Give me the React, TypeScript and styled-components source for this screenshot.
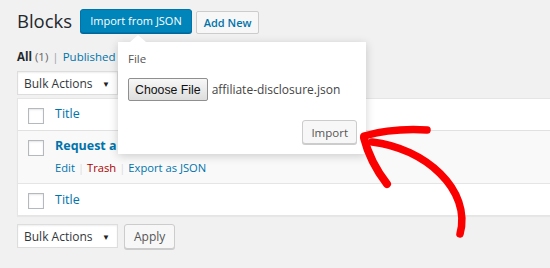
import React from "react";
import styled, { createGlobalStyle } from "styled-components";

const GlobalStyle = createGlobalStyle`
  html, body {
    margin: 0;
    padding: 0;
    background: #f1f1f1;
    overflow: hidden;
  }
  body {
    font-family: "Open Sans", "Noto Sans", sans-serif;
    font-size: 12px;
    color: #444;
  }
`;

const Page = styled.div`
  position: relative;
  width: 550px;
  height: 268px;
  padding: 9px 0 0 17px;
  box-sizing: border-box;
  overflow: hidden;
`;

const Header = styled.div`
  display: flex;
  align-items: flex-start;
  height: 26px;
`;

const PageTitle = styled.h1`
  margin: 0 8px 0 0;
  font-size: 18.5px;
  font-weight: 400;
  line-height: 24px;
  color: #23282d;
`;

const PrimaryButton = styled.button`
  height: 24px;
  padding: 0 9px;
  border: 1px solid #0073aa;
  border-radius: 3px;
  background: #0085ba;
  box-shadow: 0 1px 0 #006799;
  color: #fff;
  font-family: inherit;
  font-size: 11px;
  line-height: 20px;
`;

const TitleAction = styled.button`
  height: 23px;
  margin: 2px 0 0 4px;
  padding: 0 7px;
  border: 1px solid #ccc;
  border-radius: 2px;
  background: #f7f7f7;
  color: #0073aa;
  font-family: inherit;
  font-size: 11px;
  font-weight: 600;
  line-height: 20px;
`;

const Filters = styled.div`
  display: flex;
  align-items: center;
  gap: 3px;
  height: 21px;
  margin-top: 11px;
  color: #666;
  font-size: 11.5px;
`;

const FilterCurrent = styled.span`
  font-weight: 700;
  color: #23282d;
`;

const FilterSep = styled.span`
  color: #a0a5aa;
  margin: 0 1px;
`;

const FilterLink = styled.span`
  color: #0073aa;
`;

const TableNav = styled.div<{ $gap: number }>`
  display: flex;
  align-items: flex-start;
  gap: 6px;
  margin: ${(p) => p.$gap}px 0 0;
`;

const Select = styled.div`
  display: flex;
  align-items: center;
  justify-content: space-between;
  box-sizing: border-box;
  width: 101px;
  height: 24px;
  padding: 0 7px 0 6px;
  background: #fff;
  border: 1px solid #ddd;
  box-shadow: inset 0 1px 2px rgba(0, 0, 0, 0.07);
  color: #32373c;
  font-size: 12px;
`;

const Caret = styled.span`
  font-size: 8px;
  color: #222;
`;

const SecondaryButton = styled.button`
  height: 25px;
  padding: 0 9px;
  border: 1px solid #ccc;
  border-radius: 3px;
  background: #f7f7f7;
  box-shadow: 0 1px 0 #ccc;
  color: #555;
  font-family: inherit;
  font-size: 12px;
  line-height: 21px;
`;

const Table = styled.div`
  margin: 3px 0 0;
  width: 560px;
  background: #fff;
  border: 1px solid #e5e5e5;
  box-shadow: 0 1px 1px rgba(0, 0, 0, 0.04);
`;

const Row = styled.div<{ $height: number; $alt?: boolean; $divider?: string }>`
  display: flex;
  align-items: flex-start;
  height: ${(p) => p.$height}px;
  background: ${(p) => (p.$alt ? "#f9f9f9" : "#fff")};
  border-top: ${(p) => (p.$divider ? `1px solid ${p.$divider}` : "none")};
  box-sizing: border-box;
`;

const CheckCell = styled.div<{ $top: number }>`
  width: 37px;
  padding: ${(p) => p.$top}px 0 0 10px;
  box-sizing: border-box;
  flex: none;
`;

const Checkbox = styled.span`
  display: block;
  width: 14px;
  height: 14px;
  border: 1px solid #b4b9be;
  background: #fff;
  box-shadow: inset 0 1px 2px rgba(0, 0, 0, 0.1);
`;

const TitleCell = styled.div<{ $top: number }>`
  padding-top: ${(p) => p.$top}px;
  display: flex;
  flex-direction: column;
  gap: 5px;
`;

const ColumnTitle = styled.span`
  color: #0073aa;
  font-size: 12.5px;
  line-height: 18px;
`;

const RowTitle = styled.span`
  color: #0073aa;
  font-size: 12.5px;
  font-weight: 700;
  line-height: 18px;
`;

const RowActions = styled.div`
  display: flex;
  gap: 3px;
  font-size: 11.2px;
  line-height: 16px;
`;

const ActionLink = styled.span<{ $danger?: boolean }>`
  color: ${(p) => (p.$danger ? "#a00" : "#0073aa")};
`;

const ActionSep = styled.span`
  color: #ddd;
`;

const Popover = styled.div`
  position: absolute;
  left: 118px;
  top: 42px;
  width: 248px;
  height: 112px;
  box-sizing: border-box;
  padding: 9px 9px 10px 10px;
  background: #fff;
  box-shadow: 0 2px 9px rgba(0, 0, 0, 0.18);
  display: flex;
  flex-direction: column;

  &::before {
    content: "";
    position: absolute;
    left: 12px;
    top: -7px;
    border-left: 8px solid transparent;
    border-right: 8px solid transparent;
    border-bottom: 7px solid #fff;
  }
`;

const FieldLabel = styled.span`
  color: #555;
  font-size: 11.5px;
  line-height: 16px;
`;

const FileRow = styled.div`
  display: flex;
  align-items: center;
  gap: 4px;
  margin-top: 11px;
`;

const ChooseButton = styled.button`
  height: 23px;
  padding: 0 6px;
  border: 1px solid #8f8f8f;
  border-radius: 2px;
  background: linear-gradient(#f7f7f7, #dedede);
  color: #111;
  font-family: "Liberation Sans", Arial, sans-serif;
  font-size: 12.3px;
`;

const FileName = styled.span`
  color: #444;
  font-size: 12px;
`;

const PopoverFooter = styled.div`
  display: flex;
  justify-content: flex-end;
  margin-top: auto;
`;

const ImportButton = styled(SecondaryButton)`
  height: 24px;
  padding: 0 8px;
  font-size: 11.5px;
`;

const Annotation = styled.svg`
  position: absolute;
  left: 350px;
  top: 118px;
  pointer-events: none;
`;

export default function App() {
  return (
    <>
      <GlobalStyle />
      <Page>
        <Header>
          <PageTitle>Blocks</PageTitle>
          <PrimaryButton>Import from JSON</PrimaryButton>
          <TitleAction>Add New</TitleAction>
        </Header>

        <Filters>
          <FilterCurrent>All</FilterCurrent>
          <span>(1)</span>
          <FilterSep>|</FilterSep>
          <FilterLink>Published</FilterLink>
          <span>(1)</span>
        </Filters>

        <TableNav $gap={4}>
          <Select>
            Bulk Actions <Caret>▼</Caret>
          </Select>
        </TableNav>

        <Table>
          <Row $height={31}>
            <CheckCell $top={9}>
              <Checkbox />
            </CheckCell>
            <TitleCell $top={6}>
              <ColumnTitle>Title</ColumnTitle>
            </TitleCell>
          </Row>
          <Row $height={53} $alt $divider="#e1e1e1">
            <CheckCell $top={9}>
              <Checkbox />
            </CheckCell>
            <TitleCell $top={6}>
              <RowTitle>Request a Quote</RowTitle>
              <RowActions>
                <ActionLink>Edit</ActionLink>
                <ActionSep>|</ActionSep>
                <ActionLink $danger>Trash</ActionLink>
                <ActionSep>|</ActionSep>
                <ActionLink>Export as JSON</ActionLink>
              </RowActions>
            </TitleCell>
          </Row>
          <Row $height={32} $divider="#e5e5e5">
            <CheckCell $top={9}>
              <Checkbox />
            </CheckCell>
            <TitleCell $top={7}>
              <ColumnTitle>Title</ColumnTitle>
            </TitleCell>
          </Row>
        </Table>

        <TableNav $gap={8}>
          <Select>
            Bulk Actions <Caret>▼</Caret>
          </Select>
          <SecondaryButton>Apply</SecondaryButton>
        </TableNav>

        <Popover>
          <FieldLabel>File</FieldLabel>
          <FileRow>
            <ChooseButton>Choose File</ChooseButton>
            <FileName>affiliate-disclosure.json</FileName>
          </FileRow>
          <PopoverFooter>
            <ImportButton>Import</ImportButton>
          </PopoverFooter>
        </Popover>

        <Annotation width="130" height="130" viewBox="350 118 130 130">
          <g fill="none" stroke="#fb0000" strokeLinecap="round" strokeLinejoin="round">
            <path d="M364 136 Q 392 128 427 130" strokeWidth="7.5" />
            <path d="M364 138 Q 370 162 387 184" strokeWidth="8" />
            <path d="M372 142 C 425 148, 472 190, 460 234" strokeWidth="7.5" />
          </g>
        </Annotation>
      </Page>
    </>
  );
}
